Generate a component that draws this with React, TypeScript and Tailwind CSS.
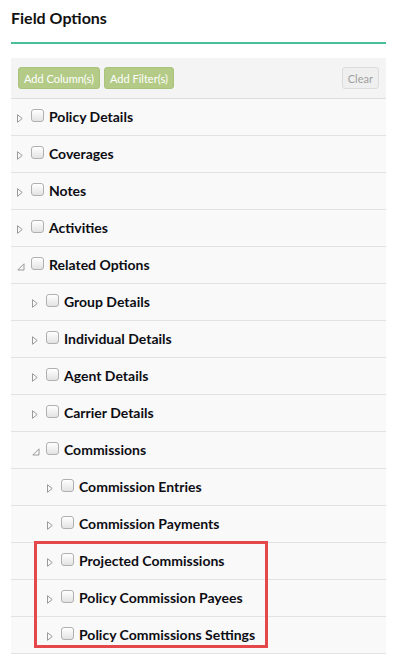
import React from "react";

type Row = { label: string; level: number; open?: boolean };

const rows: Row[] = [
  { label: "Policy Details", level: 0 },
  { label: "Coverages", level: 0 },
  { label: "Notes", level: 0 },
  { label: "Activities", level: 0 },
  { label: "Related Options", level: 0, open: true },
  { label: "Group Details", level: 1 },
  { label: "Individual Details", level: 1 },
  { label: "Agent Details", level: 1 },
  { label: "Carrier Details", level: 1 },
  { label: "Commissions", level: 1, open: true },
  { label: "Commission Entries", level: 2 },
  { label: "Commission Payments", level: 2 },
  { label: "Projected Commissions", level: 2 },
  { label: "Policy Commission Payees", level: 2 },
  { label: "Policy Commissions Settings", level: 2 },
];

function Arrow({ open }: { open?: boolean }) {
  if (open) {
    return (
      <svg width="8" height="8" viewBox="0 0 8 8" className="shrink-0">
        <path d="M7 0.8 L7 7 L0.8 7 Z" fill="none" stroke="#9a9a9a" strokeWidth="1" />
      </svg>
    );
  }
  return (
    <svg width="6" height="9" viewBox="0 0 6 9" className="shrink-0">
      <path d="M0.5 0.7 L5.2 4.5 L0.5 8.3 Z" fill="none" stroke="#9a9a9a" strokeWidth="1" />
    </svg>
  );
}

function Check() {
  return (
    <span className="w-[13px] h-[13px] shrink-0 rounded-[3px] border border-[#b0b0b0] bg-gradient-to-b from-[#ffffff] to-[#e3e3e3]" />
  );
}

const indentCls = ["pl-[6px]", "pl-[21px]", "pl-[36px]"];

export default function App() {
  return (
    <div
      className="relative w-[407px] h-[664px] bg-white overflow-hidden"
      style={{ fontFamily: "Lato, 'Open Sans', sans-serif" }}
    >
      <div className="ml-[11px] w-[375px]">
        <div className="h-[42px] pt-[9px] text-[16px] font-bold text-[#111] leading-[18px]">
          Field Options
        </div>
        <div className="h-[2px] bg-[#48bf9a]" />
        <div className="h-[14px]" />
        <div className="bg-[#f4f4f4] border-b border-[#dedede] h-[41px] flex items-center px-[7px] gap-[4px]">
          <button className="h-[22px] px-[5px] rounded-[3px] bg-[#b3cb86] border border-[#a9c27c] text-white text-[11px] leading-none">
            Add Column(s)
          </button>
          <button className="h-[22px] px-[5px] rounded-[3px] bg-[#b3cb86] border border-[#a9c27c] text-white text-[11px] leading-none">
            Add Filter(s)
          </button>
          <div className="flex-1" />
          <button className="h-[22px] px-[5px] rounded-[3px] bg-[#efefef] border border-[#dcdcdc] text-[#a0a0a0] text-[11px] leading-none">
            Clear
          </button>
        </div>
        {rows.map((r, i) => (
          <div
            key={i}
            className={`h-[37px] bg-[#f9f9f9] border-b border-[#e2e2e2] flex items-center ${indentCls[r.level]}`}
          >
            <div className="w-[8px] flex justify-start items-center mt-[3px]">
              <Arrow open={r.open} />
            </div>
            <div className="ml-[6px] mt-[-4px] flex">
              <Check />
            </div>
            <span className="ml-[5px] text-[14px] font-bold text-[#0d0d14] leading-none mt-[-1px]">
              {r.label}
            </span>
          </div>
        ))}
      </div>
      <div className="absolute left-[34px] top-[541px] w-[234px] h-[107px] border-[3px] border-[#e5484a] pointer-events-none" />
    </div>
  );
}
